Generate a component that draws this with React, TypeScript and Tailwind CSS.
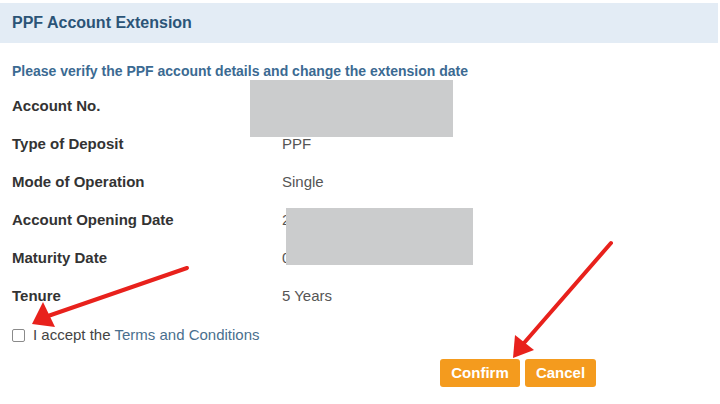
import React from 'react';

const rows = [
  { label: 'Account No.', value: '' },
  { label: 'Type of Deposit', value: 'PPF' },
  { label: 'Mode of Operation', value: 'Single' },
  { label: 'Account Opening Date', value: '2' },
  { label: 'Maturity Date', value: '0' },
  { label: 'Tenure', value: '5 Years' },
];

const App: React.FC = () => {
  return (
    <div className="relative w-[720px] h-[404px] bg-white overflow-hidden font-['Liberation_Sans',Arial,sans-serif]">
      {/* Header */}
      <div className="mt-[3px] mr-[2px] h-[40px] bg-[#e3ecf5] flex items-center px-3">
        <h1 className="text-[16px] font-bold text-[#2b5477]">PPF Account Extension</h1>
      </div>

      {/* Subtitle */}
      <div className="mt-[18px] px-3 h-[20px] flex items-center">
        <p className="text-[14px] font-bold text-[#3b6a92]">
          Please verify the PPF account details and change the extension date
        </p>
      </div>

      {/* Details */}
      <div className="mt-[6px] px-3">
        {rows.map(r => (
          <div key={r.label} className="h-[38px] flex items-center">
            <div className="w-[270px] text-[15px] font-bold text-[#333333]">{r.label}</div>
            <div className="text-[15px] text-[#555555]">{r.value}</div>
          </div>
        ))}
      </div>

      {/* Terms */}
      <div className="h-[40px] px-3 flex items-center gap-[8px]">
        <span className="w-[13px] h-[13px] border border-[#8a8a8a] rounded-[2px] bg-white"></span>
        <span className="text-[15px] text-[#444444]">
          I accept the <span className="text-[#4a6f8e]">Terms and Conditions</span>
        </span>
      </div>

      {/* Buttons */}
      <div className="mt-[4px] ml-[440px] flex gap-[5px]">
        <button className="w-[80px] h-[28px] rounded-[3px] bg-[#f49b1e] text-white text-[15px] font-bold">Confirm</button>
        <button className="w-[71px] h-[28px] rounded-[3px] bg-[#f49b1e] text-white text-[15px] font-bold">Cancel</button>
      </div>

      {/* Redaction boxes */}
      <div className="absolute left-[250px] top-[80px] w-[203px] h-[57px] bg-[#cbcccd]"></div>
      <div className="absolute left-[286px] top-[208px] w-[187px] h-[57px] bg-[#cbcccd]"></div>

      {/* Annotation arrows */}
      <svg className="absolute inset-0 pointer-events-none" width="720" height="404" viewBox="0 0 720 404">
        <line x1="187" y1="268" x2="48" y2="316" stroke="#e8211c" strokeWidth="4" strokeLinecap="round" />
        <polygon points="32,324 43,302 55,327" fill="#e8211c" />
        <line x1="611" y1="243" x2="524" y2="343" stroke="#e8211c" strokeWidth="4" strokeLinecap="round" />
        <polygon points="513,358 515,335 534,350" fill="#e8211c" />
      </svg>
    </div>
  );
};

export default App;
